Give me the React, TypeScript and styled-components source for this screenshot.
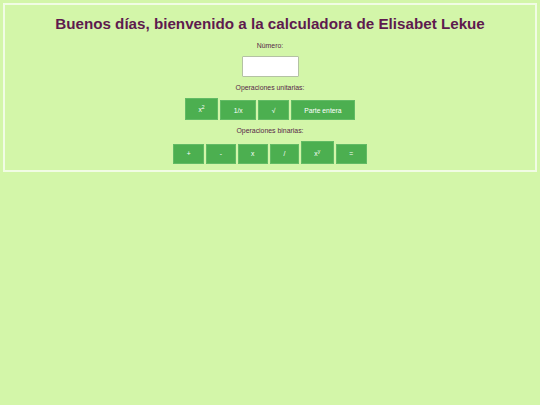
import styled, { createGlobalStyle } from "styled-components";

const GlobalStyle = createGlobalStyle`
  html, body {
    margin: 0;
    padding: 0;
    background: #d3f6a9;
    font-family: "Liberation Sans", Arial, sans-serif;
  }
`;

const Calculator = styled.div`
  margin: 3px;
  border: 2px solid #f1fce4;
  display: flex;
  flex-direction: column;
  align-items: center;
  gap: 7px;
  padding-bottom: 6.5px;
`;

const Title = styled.h1`
  margin: 9.8px 0 3.6px;
  font-size: 15.2px;
  font-weight: bold;
  color: #5e1a4e;
  text-align: center;
`;

const Label = styled.div`
  font-size: 6.9px;
  color: #562648;
`;

const NumberInput = styled.input`
  box-sizing: border-box;
  width: 57px;
  height: 20.5px;
  margin: 0;
  padding: 0 3px;
  border: 1px solid #b4c2a4;
  border-radius: 1px;
  background: #ffffff;
  font-family: inherit;
  font-size: 7px;
  outline: none;
`;

const ButtonRow = styled.div`
  display: flex;
  align-items: baseline;
  gap: 2px;
`;

const OpButton = styled.button`
  margin: 0;
  padding: 5.6px 12.5px;
  border: 1px solid #62bb65;
  background: #4caf50;
  color: #ffffff;
  font-family: inherit;
  font-size: 6.75px;
  line-height: normal;
  cursor: pointer;

  sup {
    font-size: 5px;
  }
`;

export default function App() {
  return (
    <>
      <GlobalStyle />
      <Calculator>
        <Title>Buenos días, bienvenido a la calculadora de Elisabet Lekue</Title>
        <Label>Número:</Label>
        <NumberInput type="text" />
        <Label>Operaciones unitarias:</Label>
        <ButtonRow>
          <OpButton>
            x<sup>2</sup>
          </OpButton>
          <OpButton>1/x</OpButton>
          <OpButton>√</OpButton>
          <OpButton>Parte entera</OpButton>
        </ButtonRow>
        <Label>Operaciones binarias:</Label>
        <ButtonRow>
          <OpButton>+</OpButton>
          <OpButton>-</OpButton>
          <OpButton>x</OpButton>
          <OpButton>/</OpButton>
          <OpButton>
            x<sup>y</sup>
          </OpButton>
          <OpButton>=</OpButton>
        </ButtonRow>
      </Calculator>
    </>
  );
}
